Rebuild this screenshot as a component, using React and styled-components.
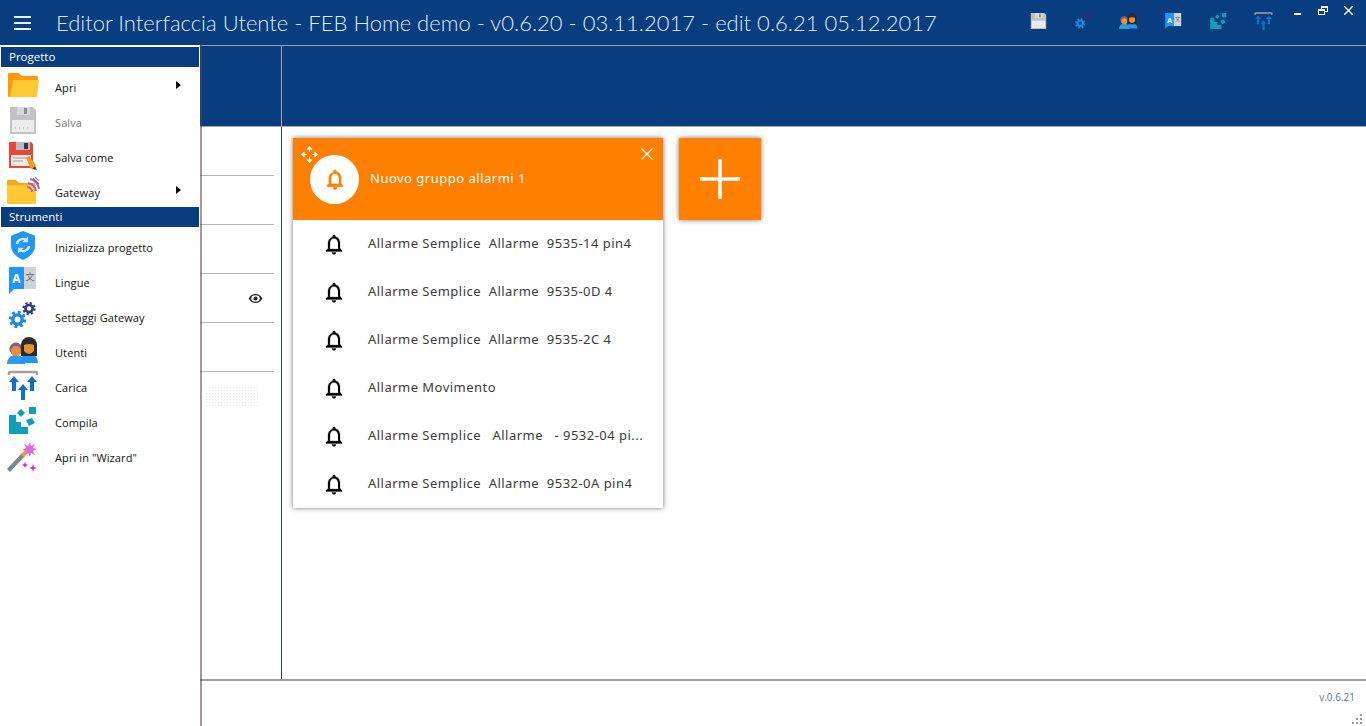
import React from 'react'
import styled, { createGlobalStyle } from 'styled-components'
import { X } from 'lucide-react'

const BLUE = '#083d7f'
const ORANGE = '#ff8000'

const Global = createGlobalStyle`
  html, body { margin: 0; padding: 0; background: #fff; overflow: hidden; }
  body { font-family: "Open Sans", "Liberation Sans", sans-serif; }
`

const Page = styled.div`
  position: relative;
  width: 1366px;
  height: 726px;
  display: flex;
  flex-direction: column;
  background: #fff;
  overflow: hidden;
`

const TitleBar = styled.header`
  height: 45px;
  flex: none;
  display: flex;
  align-items: center;
  background: ${BLUE};
  color: #dcecf8;
`

const Burger = styled.div`
  width: 17px;
  margin-left: 14px;
  display: flex;
  flex-direction: column;
  gap: 4px;
  span { display: block; height: 2px; background: #e8f0f8; }
`

const Title = styled.h1`
  margin: 0 0 0 25px;
  font-family: Lato, "Open Sans", sans-serif;
  font-size: 22px;
  font-weight: 300;
  white-space: nowrap;
  flex: 1;
`

const Tools = styled.div`
  display: flex;
  align-items: center;
  gap: 26px;
  margin-right: 21px;
`

const ToolSlot = styled.div`
  width: 19px;
  height: 19px;
  display: flex;
`

const WinButtons = styled.div`
  align-self: flex-start;
  display: flex;
  align-items: flex-start;
  margin: 3px 10px 0 0;
  color: #fff;
`

const Minimize = styled.div`
  width: 7px;
  height: 2px;
  margin: 10px 17px 0 0;
  background: #fff;
`

const Restore = styled.div`
  position: relative;
  width: 10px;
  height: 9px;
  margin: 3px 13px 0 0;
  &::before, &::after {
    content: '';
    position: absolute;
    box-sizing: border-box;
    width: 7px;
    height: 6px;
    border: 1px solid #fff;
    border-top-width: 2px;
    background: ${BLUE};
  }
  &::before { right: 0; top: 0; }
  &::after { left: 0; bottom: 0; }
`

const Workspace = styled.main`
  height: 636px;
  flex: none;
  display: grid;
  grid-template-columns: 281px 1fr;
  border-top: 1px solid #9c9c9c;
  border-bottom: 2px solid #a0a0a0;
  box-sizing: border-box;
`

const SidePanel = styled.section`
  display: flex;
  flex-direction: column;
`

const Band = styled.div`
  height: 80px;
  flex: none;
  background: ${BLUE};
  border-bottom: 1px solid #a8a8a8;
`

const SideRows = styled.div`
  padding-right: 7px;
`

const SideRow = styled.div`
  height: 48px;
  border-bottom: 1px solid #b4b4b4;
  display: flex;
  align-items: center;
  justify-content: flex-end;
  padding-right: 11px;
  color: #222;
`

const DottedPatch = styled.div`
  width: 55px;
  height: 20px;
  margin: 14px 0 0 205px;
  background-image: radial-gradient(#e6e6e6 0.6px, transparent 0.8px);
  background-size: 3px 3px;
`

const Canvas = styled.section`
  display: flex;
  flex-direction: column;
  border-left: 1px solid #2c4260;
  min-width: 0;
`

const CanvasBand = styled(Band)`
  margin-left: -1px;
  border-left: 1px solid #a8a8a8;
`

const CardArea = styled.div`
  display: flex;
  align-items: flex-start;
  gap: 16px;
  padding: 11px 0 0 11px;
`

const Card = styled.article`
  width: 370px;
  background: #fff;
  box-shadow: 0 0 5px rgba(0, 0, 0, 0.55);
`

const CardHead = styled.div`
  position: relative;
  height: 82px;
  display: flex;
  align-items: center;
  padding-left: 17px;
  gap: 11px;
  background: ${ORANGE};
  color: #fff;
  font-family: "Noto Sans", sans-serif;
`

const HeadLabel = styled.span`
  font-size: 13px;
  letter-spacing: 0.5px;
  margin-top: -2px;
`

const Disc = styled.div`
  width: 49px;
  height: 49px;
  border-radius: 50%;
  background: #fff;
  color: ${ORANGE};
  display: flex;
  align-items: center;
  justify-content: center;
`

const MoveHandle = styled.svg`
  position: absolute;
  left: 8px;
  top: 8px;
`

const CloseHandle = styled(X)`
  position: absolute;
  right: 6px;
  top: 6px;
`

const AlarmRow = styled.div`
  height: 48px;
  display: flex;
  align-items: center;
  color: #000;
`

const AlarmIcon = styled.div`
  width: 24px;
  height: 24px;
  margin-left: 29px;
  margin-right: 22px;
  flex: none;
`

const AlarmText = styled.div`
  white-space: pre;
  font-family: "Noto Sans", sans-serif;
  font-size: 13px;
  letter-spacing: 0.47px;
  color: #3a3a3a;
  margin-top: -2px;
`

const AddTile = styled.button`
  width: 82px;
  height: 82px;
  border: 0;
  padding: 0;
  background: ${ORANGE};
  display: flex;
  align-items: center;
  justify-content: center;
  box-shadow: 0 0 5px rgba(0, 0, 0, 0.55);
`

const Footer = styled.footer`
  flex: 1;
  position: relative;
  display: flex;
  justify-content: flex-end;
  padding: 9px 11px 0 0;
  font-size: 10px;
  color: #5a7390;
`

const Grip = styled.svg`
  position: absolute;
  right: 3px;
  bottom: 1px;
`

const Drawer = styled.nav`
  position: absolute;
  left: 0;
  top: 45px;
  bottom: 0;
  width: 198px;
  background: #fff;
  border-left: 1px solid #fff;
  border-right: 1px solid #fff;
  box-shadow: 2px 0 0 rgba(90, 70, 70, 0.55);
  padding-top: 2px;
  font-size: 11px;
  letter-spacing: 0.1px;
`

const Section = styled.div`
  height: 20px;
  background: ${BLUE};
  color: #fff;
  font-size: 11.5px;
  line-height: 20px;
  padding-left: 8px;
  position: relative;
  letter-spacing: 0;
`

const Group = styled.div`
  padding-top: 3px;
  margin-bottom: ${p => (p.$overlap ? '-3px' : '0')};
`

const Item = styled.div`
  height: 35px;
  display: flex;
  align-items: center;
  position: relative;
  color: ${p => (p.$off ? '#77797c' : '#111')};
`

const ItemIcon = styled.div`
  width: 32px;
  height: 32px;
  margin-left: 6px;
  margin-right: 16px;
  display: flex;
  flex: none;
`

const ItemArrow = styled.div`
  position: absolute;
  left: 175px;
  top: 11px;
  width: 0;
  height: 0;
  border-left: 5px solid #000;
  border-top: 4px solid transparent;
  border-bottom: 4px solid transparent;
`

const BellIcon = ({ bold }) => (
  <svg width="24" height="24" viewBox="0 0 24 24" fill="currentColor" stroke="currentColor" strokeWidth={bold ? 0.7 : 0.25}>
    <path d="M16 17H8v-6c0-2.48 1.51-4.5 4-4.5s4 2.02 4 4.5m2 5v-5c0-3.07-1.64-5.64-4.5-6.32V4.5c0-.83-.67-1.5-1.5-1.5s-1.5.67-1.5 1.5v.68C7.63 5.86 6 8.42 6 11.5v5l-2 2v1h16v-1m-8 4c1.1 0 2-.9 2-2h-4c0 1.1.9 2 2 2Z" />
  </svg>
)

const EyeIcon = () => (
  <svg width="15" height="11" viewBox="0 0 16 12">
    <path d="M0.5 6C2.500 2.600 5 1 8 1s5.500 1.600 7.500 5C13.500 9.400 11 11 8 11S2.500 9.400.5 6Z" fill="#222" />
    <ellipse cx="8" cy="6" rx="4.600" ry="3.500" fill="#fff" />
    <circle cx="8" cy="6" r="2.300" fill="#222" />
  </svg>
)

const MoveArrows = () => (
  <MoveHandle width="17" height="17" viewBox="0 0 17 17" fill="#fff" stroke="#fff" strokeWidth="1">
    <path d="M8.500 3v3M8.500 11v3M3 8.500h3M11 8.500h3" fill="none" />
    <path d="M8.500 0l3 3.500h-6ZM8.500 17l3-3.500h-6ZM0 8.500l3.500-3v6ZM17 8.500l-3.500-3v6Z" stroke="none" />
  </MoveHandle>
)

const PlusMark = () => (
  <svg width="40" height="40" viewBox="0 0 40 40">
    <path d="M20 0v40M0 20h40" stroke="#fff" strokeWidth="3.500" />
  </svg>
)

const GripDots = () => (
  <Grip width="11" height="11" viewBox="0 0 11 11" fill="#9a9a9a">
    <rect x="8" y="0" width="2" height="2" />
    <rect x="4" y="4" width="2" height="2" />
    <rect x="8" y="4" width="2" height="2" />
    <rect x="0" y="8" width="2" height="2" />
    <rect x="4" y="8" width="2" height="2" />
    <rect x="8" y="8" width="2" height="2" />
  </Grip>
)

const Svg = ({ children }) => (
  <svg width="100%" height="100%" viewBox="0 0 32 32" style={{ overflow: 'visible' }}>{children}</svg>
)

const FolderIcon = () => (
  <Svg>
    <path d="M1 2q0-1 1-1h10l3 3h15q1 0 1 1v5H1Z" fill="#fb9b0b" />
    <path d="M1 8h6L4 25H2q-1 0-1-1Z" fill="#fb9b0b" />
    <path d="M6 8h26l-2 16q0 1-1 1H3Z" fill="#ffc833" />
  </Svg>
)

const FloppyIcon = () => (
  <Svg>
    <path d="M3 0h23l3 3v24H3Z" fill="#c0c2c5" />
    <rect x="10" y="0" width="13" height="8" fill="#d8d9da" />
    <rect x="17" y="1" width="3" height="6" fill="#8b8c8e" />
    <rect x="5" y="13" width="22" height="12" fill="#ececec" />
    <path d="M8 21h16" stroke="#a8a8a8" strokeDasharray="1 3" />
  </Svg>
)

const SaveAsIcon = () => (
  <Svg>
    <path d="M2 0h22l2 2v24H2Z" fill="#e8473c" />
    <rect x="9" y="0" width="14" height="8" fill="#b8bcc2" />
    <rect x="17" y="1" width="4" height="6" fill="#333a44" />
    <rect x="4" y="13" width="20" height="11" fill="#f0ece4" />
    <path d="M6 16h14M6 19h10" stroke="#999" />
    <path d="M19 16l3-2 7 9-2 3-3 1Z" fill="#f49a1f" />
    <path d="M25 27l5 1-2-4Z" fill="#40444a" />
  </Svg>
)

const GatewayFolderIcon = () => (
  <Svg>
    <path d="M0 4q0-1 1-1h8l3 3h16v21H2q-2 0-2-2Z" fill="#f6a51e" />
    <path d="M0 8h29v18q0 1-1 1H1q-1 0-1-1Z" fill="#ffc833" />
    <path d="M20 10a5 5 0 0 1 5 5M21 6a9 9 0 0 1 8 8M23 2a11 11 0 0 1 9 10" fill="none" stroke="#b05cc6" strokeWidth="2" />
    <path d="M26 1l6 6M28 0l4 4" stroke="#6d3f86" />
  </Svg>
)

const ShieldIcon = () => (
  <g transform="translate(0 -2) scale(1 .94)">
    <path d="M16 1l12 5v11c0 7-6 12-12 15C10 29 4 24 4 17V6Z" fill="#2196f3" />
    <path d="M10 15a6 6 0 0 1 10-4M22 17a6 6 0 0 1-10 4" fill="none" stroke="#cde8fb" strokeWidth="2.500" />
    <path d="M21 7v6h-6ZM11 25v-6h6Z" fill="#cde8fb" />
  </g>
)

const LangIcon = () => (
  <g transform="translate(0 -3)">
    <path d="M16 3h13v22H16Z" fill="#d0d3d6" />
    <path d="M2 3h15v22H7l-5 5Z" fill="#2196f3" />
    <text x="9.500" y="19" fontFamily="Open Sans" fontSize="12" fontWeight="700" fill="#fff" textAnchor="middle">A</text>
    <text x="23" y="16" fontFamily="Noto Sans CJK SC" fontSize="9" fill="#666" textAnchor="middle">文</text>
  </g>
)

// teeth are a dashed ring so the hole stays see-through on the blue bar
const Gear = ({ x, y, s, color }) => (
  <g transform={`translate(${x} ${y}) scale(${s})`} fill="none" stroke={color}>
    <circle r="5.500" strokeWidth="4" />
    <circle r="8.500" strokeWidth="3.500" strokeDasharray="3.340 3.340" />
  </g>
)

const GearsIcon = ({ dark = '#2e3a80' }) => (
  <Svg>
    <Gear x={10.5} y={17.5} s={0.85} color="#1e88e5" />
    <Gear x={22} y={6.5} s={0.65} color={dark} />
  </Svg>
)

const UsersIcon = () => (
  <Svg>
    <path d="M0 27c0-6 4-9 9-9s8 3 9 9Z" fill="#2e9be8" />
    <circle cx="9" cy="12" r="6.500" fill="#8d5a86" />
    <circle cx="9" cy="14" r="5" fill="#e69136" />
    <path d="M13 26c0-6 4-9 9-9s9 3 9 9Z" fill="#2196f3" />
    <path d="M14 8a8 8 0 1 1 16 0v11H14Z" fill="#2b2a2e" />
    <path d="M17 8q5-2 10 0v6q-5 6-10 0Z" fill="#e69136" />
  </Svg>
)

const UploadIcon = () => (
  <g transform="translate(0 -3)">
    <path d="M2 6V4q0-1 1-1h26q1 0 1 1v2" fill="none" stroke="#a2a2a2" strokeWidth="2.500" />
    <path d="M7 7l5 6H9v9H5v-9H2ZM25 7l5 6h-3v9h-4v-9h-3ZM16 15l5 6h-3v10h-4V21h-3Z" fill="#1470c4" />
  </g>
)

const CompileIcon = () => (
  <Svg>
    <path d="M2 8h7v7h5v5h7v7H2Z" fill="#0e9eb5" />
    <path d="M14 2l4 4-4 4-4-4Z M22 0h7v7h-7Z M19 13l6-2 3 5-6 3Z" fill="#0e9eb5" />
  </Svg>
)

const WandIcon = () => (
  <Svg>
    <path d="M0 27L15 11l3 3L3 30Z" fill="#7d8690" />
    <path d="M14 12l5-5 3 3-5 5Z" fill="#f6a51e" />
    <path d="M23 0l1 4 4-2-2 4 4 1-4 2 2 4-4-2-1 4-2-4-4 2 2-4-4-1 4-2-2-4 4 2Z" fill="#d86de0" />
    <path d="M26 22l1 3 3 1-3 1-1 3-1-3-3-1 3-1ZM18 20l1 2 2 1-2 1-1 2-1-2-2-1 2-1Z" fill="#d030d8" />
  </Svg>
)

const wrap = node => <Svg>{node}</Svg>

const toolIcons = [
  <FloppyIcon />, <GearsIcon dark="#2c2f6e" />, <UsersIcon />, wrap(<LangIcon />), <CompileIcon />, wrap(<UploadIcon />),
]

const projectItems = [
  { label: 'Apri', icon: <FolderIcon />, more: true },
  { label: 'Salva', icon: <FloppyIcon />, off: true },
  { label: 'Salva come', icon: <SaveAsIcon /> },
  { label: 'Gateway', icon: <GatewayFolderIcon />, more: true },
]

const toolItems = [
  { label: 'Inizializza progetto', icon: wrap(<ShieldIcon />) },
  { label: 'Lingue', icon: wrap(<LangIcon />) },
  { label: 'Settaggi Gateway', icon: <GearsIcon /> },
  { label: 'Utenti', icon: <UsersIcon /> },
  { label: 'Carica', icon: wrap(<UploadIcon />) },
  { label: 'Compila', icon: <CompileIcon /> },
  { label: 'Apri in "Wizard"', icon: <WandIcon /> },
]

const alarms = [
  'Allarme Semplice  Allarme  9535-14 pin4',
  'Allarme Semplice  Allarme  9535-0D 4',
  'Allarme Semplice  Allarme  9535-2C 4',
  'Allarme Movimento',
  'Allarme Semplice   Allarme   - 9532-04 pi...',
  'Allarme Semplice  Allarme  9532-0A pin4',
]

const MenuItem = ({ item }) => (
  <Item $off={item.off}>
    <ItemIcon>{item.icon}</ItemIcon>
    {item.label}
    {item.more && <ItemArrow />}
  </Item>
)

export default function App() {
  return (
    <Page>
      <Global />
      <TitleBar>
        <Burger><span /><span /><span /></Burger>
        <Title>Editor Interfaccia Utente - FEB Home demo - v0.6.20 - 03.11.2017 - edit 0.6.21 05.12.2017</Title>
        <Tools>
          {toolIcons.map((icon, i) => <ToolSlot key={i}>{icon}</ToolSlot>)}
        </Tools>
        <WinButtons>
          <Minimize />
          <Restore />
          <X size={15} strokeWidth={2.200} />
        </WinButtons>
      </TitleBar>

      <Workspace>
        <SidePanel>
          <Band />
          <SideRows>
            <SideRow />
            <SideRow />
            <SideRow />
            <SideRow><EyeIcon /></SideRow>
            <SideRow />
            <DottedPatch />
          </SideRows>
        </SidePanel>
        <Canvas>
          <CanvasBand />
          <CardArea>
            <Card>
              <CardHead>
                <MoveArrows />
                <CloseHandle size={20} color="#fff" strokeWidth={1.300} />
                <Disc><BellIcon bold /></Disc>
                <HeadLabel>Nuovo gruppo allarmi 1</HeadLabel>
              </CardHead>
              {alarms.map(text => (
                <AlarmRow key={text}>
                  <AlarmIcon><BellIcon /></AlarmIcon>
                  <AlarmText>{text}</AlarmText>
                </AlarmRow>
              ))}
            </Card>
            <AddTile><PlusMark /></AddTile>
          </CardArea>
        </Canvas>
      </Workspace>

      <Footer>
        v.0.6.21
        <GripDots />
      </Footer>

      <Drawer>
        <Section>Progetto</Section>
        <Group $overlap>
          {projectItems.map(item => <MenuItem key={item.label} item={item} />)}
        </Group>
        <Section>Strumenti</Section>
        <Group>
          {toolItems.map(item => <MenuItem key={item.label} item={item} />)}
        </Group>
      </Drawer>
    </Page>
  )
}
